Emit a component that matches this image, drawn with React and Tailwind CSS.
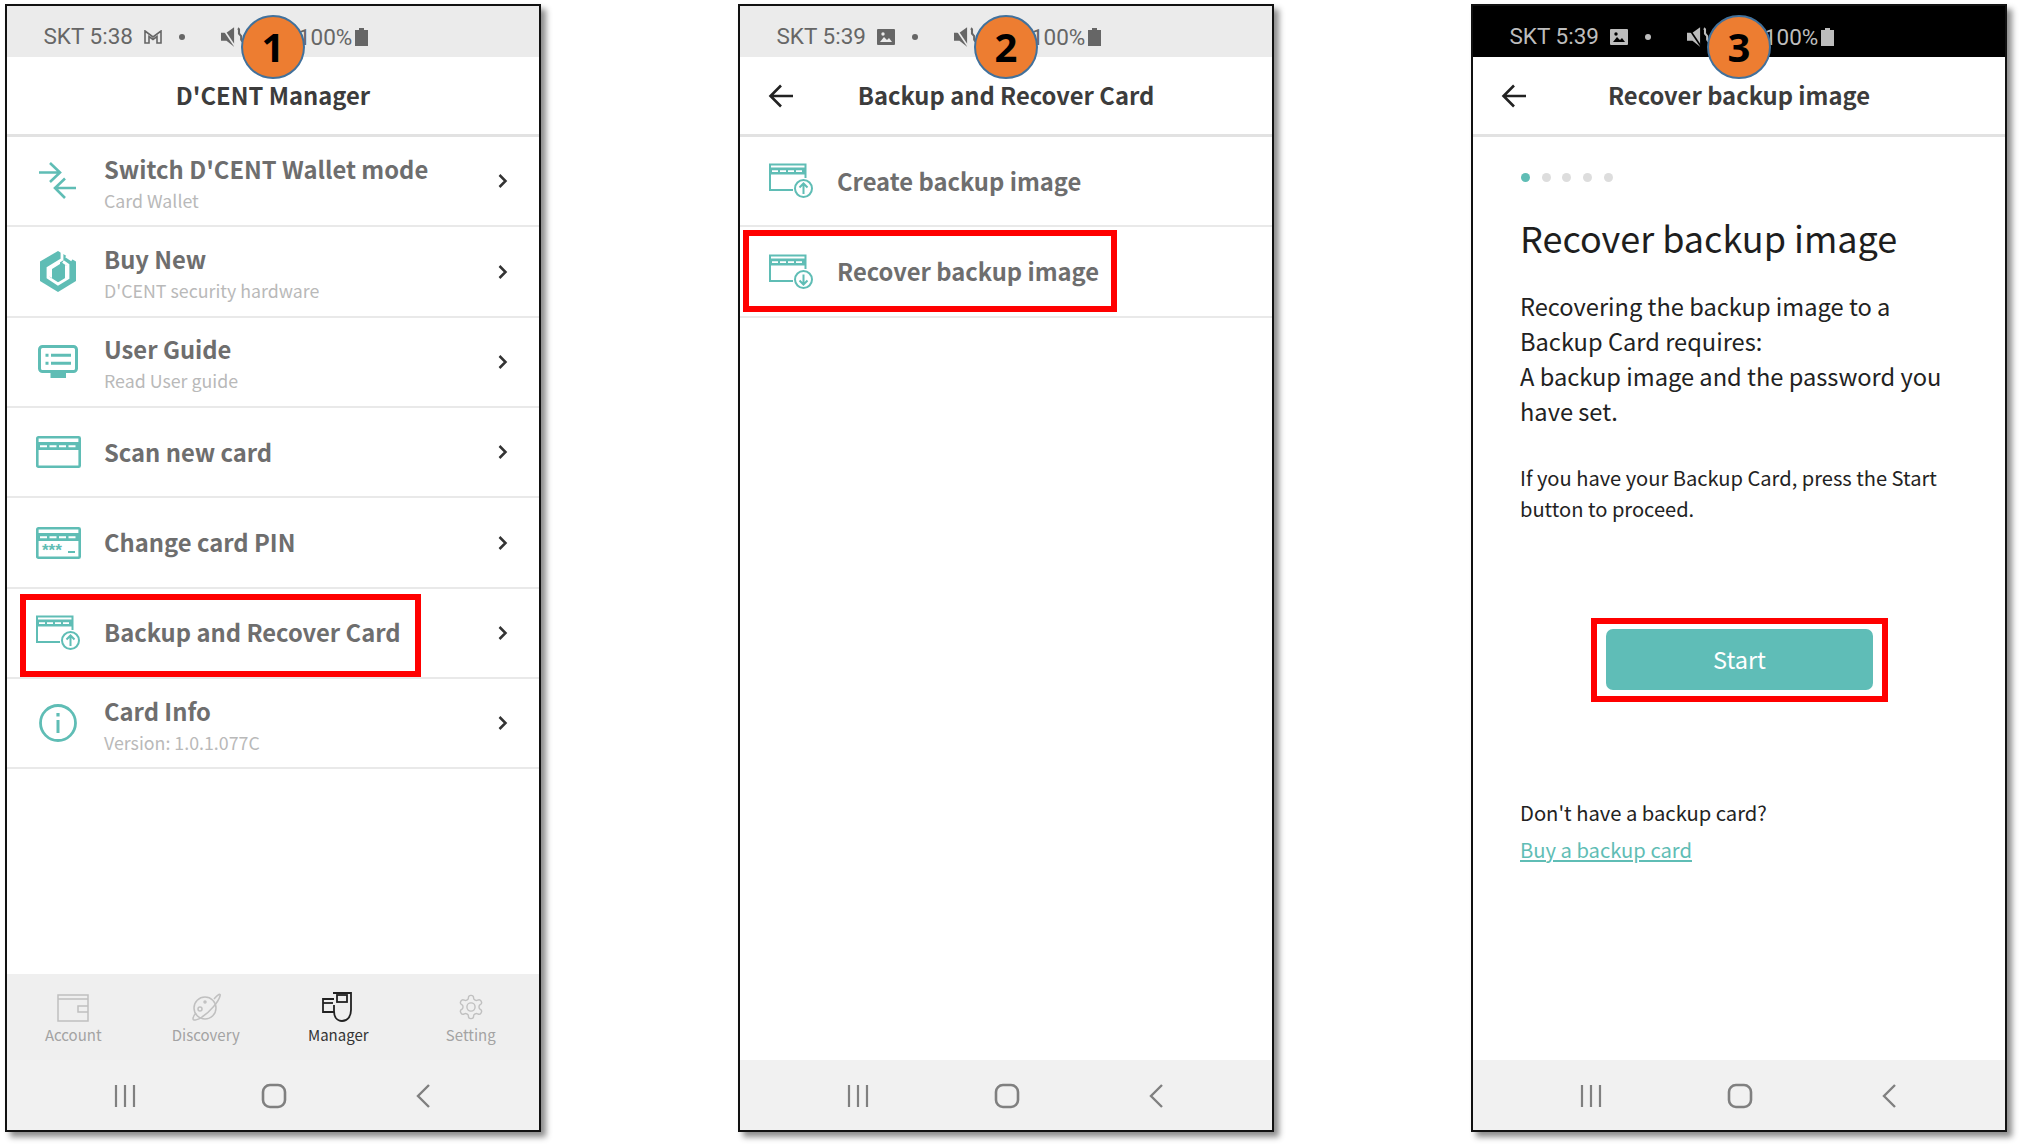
import React from "react";

const TEAL = "#5fbdb5";
const FONT = "font-['Noto_Sans_CJK_KR','Noto_Sans',sans-serif]";

function CardIcon({ pin }) {
  return (
    <svg width="45" height="32" viewBox="0 0 45 32" fill="none">
      <rect x="1.300" y="1.300" width="42.400" height="29.400" rx="1" stroke={TEAL} strokeWidth="2.600" />
      <rect x="1" y="6" width="43" height="8" fill={TEAL} />
      <path d="M4 10.200H41" stroke="#fff" strokeWidth="2" strokeDasharray="7 2.500" />
      {pin && (
        <g fill={TEAL} stroke="none">
          <text x="6" y="29" fontSize="17" fontWeight="700" fontFamily="Liberation Sans">***</text>
          <rect x="32" y="24" width="7" height="2" />
        </g>
      )}
    </svg>
  );
}

function BackupIcon({ down }) {
  return (
    <svg width="46" height="36" viewBox="0 0 46 36" fill="none">
      <path d="M25 27H2V1.500H37.500V15" stroke={TEAL} strokeWidth="2" />
      <rect x="2" y="4.500" width="35.500" height="7" fill={TEAL} />
      <path d="M4 8.100H36" stroke="#fff" strokeWidth="1.800" strokeDasharray="6 2" />
      <circle cx="35.500" cy="25.500" r="8.500" fill="#fff" stroke={TEAL} strokeWidth="2" />
      {down ? (
        <path d="M35.500 20.500V30M31.500 26.500L35.500 30.500L39.500 26.500" stroke={TEAL} strokeWidth="2" />
      ) : (
        <path d="M35.500 31V21M31.500 24.500L35.500 20.500L39.500 24.500" stroke={TEAL} strokeWidth="2" />
      )}
    </svg>
  );
}

const icons = {
  switch: (
    <svg width="40" height="38" viewBox="0 0 40 38" fill="none" stroke={TEAL} strokeWidth="2.600">
      <path d="M1 10.500H22M12 1L22 10.500L12 20" />
      <path d="M38 26H17M27 16.500L17 26L27 36" />
    </svg>
  ),
  logo: (
    <svg width="36" height="41" viewBox="0 0 36 41" fill="none">
      <path fill={TEAL} d="M18 0 36 10.500V30L18 41 0 30V10.500z" />
      <path stroke="#fff" strokeWidth="2.800" d="M22 -1V8.500L8 17V26.500L18 33L28 27V14L23 10.500" />
      <path stroke="#fff" strokeWidth="2.800" d="M26 5 32 9" />
      <path fill="#fff" d="M8 17 20 10V13L12 18V27L8 25zM25 14l3 1v12l-3 2z" />
    </svg>
  ),
  guide: (
    <svg width="40" height="33" viewBox="0 0 40 33" fill="none" stroke={TEAL} strokeWidth="3">
      <rect x="1.500" y="1.500" width="37" height="25" rx="3" />
      <rect x="12.500" y="27" width="15.500" height="6" fill={TEAL} stroke="none" />
      <path d="M7.500 10.300H10.500M13 10.300H33M7.500 18.300H10.500M13 18.300H33" />
    </svg>
  ),
  info: (
    <svg width="38" height="40" viewBox="0 0 38 40" fill="none" stroke={TEAL}>
      <circle cx="19" cy="20" r="17.500" strokeWidth="2.800" />
      <path d="M19 17V30" strokeWidth="3" />
      <path d="M19 10V13.500" strokeWidth="3.200" />
    </svg>
  ),
};

function Chevron() {
  return (
    <svg width="12" height="16" viewBox="0 0 12 16" fill="none" stroke="#333" strokeWidth="2.500" className="ml-auto mr-[30px] shrink-0">
      <path d="M2.500 2L8.500 8L2.500 14" />
    </svg>
  );
}

function MenuRow({ icon, title, sub, chevron = true, marked, markClass }) {
  return (
    <div className="relative flex h-[90.350px] items-center border-b-2 border-[#e9e9e9] pl-[28px]">
      <div className="flex w-[46px] shrink-0 items-center justify-center">{icon}</div>
      <div className={`ml-[23px] flex flex-col ${sub ? "pt-[1px]" : "pb-[1px]"}`}>
        <div className="text-[23.750px] leading-[36px] font-semibold text-[#6e6e6e]">{title}</div>
        {sub && <div className="text-[17.800px] leading-[26px] text-[#b9b9b9]">{sub}</div>}
      </div>
      {chevron && <Chevron />}
      {marked && <div className={`absolute border-[6px] border-[#ff0000] ${markClass}`} />}
    </div>
  );
}

function StatusBar({ time, kind, dark, number }) {
  const c = dark ? "#bdbdbd" : "#666666";
  const bg = dark ? "#000000" : "#ebebeb";
  return (
    <div className={`relative flex h-[51px] shrink-0 items-center pl-[36.500px] pt-[11px] ${dark ? "bg-black" : "bg-[#ebebeb]"}`}>
      <span className="text-[22.500px] font-['Roboto',sans-serif]" style={{ color: c }}>SKT {time}</span>
      <span className="ml-[10px] flex w-[20px] items-center justify-center">
        {kind === "mail" ? (
          <svg width="18" height="14" viewBox="0 0 18 14" fill="none" stroke={c} strokeWidth="1.600">
            <path d="M1 1L9 7L17 1V13H13V6.500L9 9.500L5 6.500V13H1Z" />
          </svg>
        ) : (
          <svg width="18" height="18" viewBox="0 0 18 18">
            <rect x="0" y="1" width="18" height="16" rx="1" fill={c} />
            <path fill={bg} d="M3 14l4-5 3 3 2-2 3 4z" />
            <circle cx="6" cy="6" r="1.700" fill={bg} />
          </svg>
        )}
      </span>
      <span className="ml-[16px] size-[6px] rounded-full" style={{ backgroundColor: c }} />
      <span className="ml-[36px] flex">
        <svg width="24" height="22" viewBox="0 0 22 20" fill="none">
          <path fill={c} d="M0 6h5L12 1v18l-7-5.500H0z" />
          <path d="M1 1l12 18" stroke={bg} strokeWidth="1.500" />
          <path d="M15.500 2c3 2-1 4 2 6s-1 4 2 6" stroke={c} strokeWidth="2" />
        </svg>
      </span>
      <span className="ml-[53px] text-[22.500px] font-['Roboto',sans-serif] leading-none" style={{ color: c }}>100%</span>
      <svg width="13" height="18" viewBox="0 0 13 18" className="ml-[3px]">
        <path fill={c} d="M4 0h5v2h4v16H0V2h4z" />
      </svg>
      <div className="absolute left-[234px] top-[9px] z-10 flex size-[64px] items-center justify-center rounded-full border-2 border-[#41719c] bg-[#ed7d31] font-['Open_Sans',sans-serif] text-[40px] font-bold text-black">
        {number}
      </div>
    </div>
  );
}

function Header({ title, back }) {
  return (
    <div className="grid h-[80px] shrink-0 grid-cols-[1fr_auto_1fr] items-center border-b-[3px] border-[#e2e2e2]">
      <div className="pl-[28px]">
        {back && (
          <svg width="26" height="26" viewBox="0 0 26 26" fill="none" stroke="#222" strokeWidth="2.600">
            <path d="M25 13H3M13 2.500L2.500 13L13 23.500" />
          </svg>
        )}
      </div>
      <div className="pb-[2px] text-[23.750px] font-semibold text-[#3c3c3c]">{title}</div>
      <div />
    </div>
  );
}

function SoftKeys() {
  return (
    <div className="grid h-[70px] shrink-0 grid-cols-3 items-center bg-[#f1f1f1] pl-[43px] pr-[41px] pt-[1px]">
      <svg width="24" height="26" viewBox="0 0 24 26" stroke="#808080" strokeWidth="2.200" className="justify-self-center">
        <path d="M3 2V24M12 2V24M21 2V24" />
      </svg>
      <svg width="26" height="26" viewBox="0 0 26 26" fill="none" stroke="#808080" strokeWidth="2.600" className="justify-self-center">
        <rect x="2" y="2" width="22" height="22" rx="7" />
      </svg>
      <svg width="16" height="26" viewBox="0 0 16 26" fill="none" stroke="#808080" strokeWidth="2.400" className="justify-self-center">
        <path d="M14 2L3 13L14 24" />
      </svg>
    </div>
  );
}

function Phone({ children }) {
  return (
    <div className="flex h-[1128px] w-[536px] flex-col overflow-visible border-2 border-[#111] bg-white shadow-[5px_5px_6px_rgba(0,0,0,0.45)]">
      {children}
    </div>
  );
}

function Tab({ label, active, children }) {
  return (
    <div className="flex flex-col items-center">
      <div className="flex h-[36px] items-end">{children}</div>
      <div className={`mt-[2px] text-[15px] leading-[22px] ${active ? "text-[#333]" : "text-[#a3a3a3]"}`}>{label}</div>
    </div>
  );
}

function TabBar() {
  const g = "#c0c0c0";
  return (
    <div className="grid h-[86px] shrink-0 grid-cols-4 bg-[#efefef] pr-[2px] pt-[12px]">
      <Tab label="Account">
        <svg width="32" height="28" viewBox="0 0 32 28" fill="none" stroke={g} strokeWidth="1.500">
          <path d="M1 1H31V27H1ZM1 5H31M31 12H21V18H31" />
        </svg>
      </Tab>
      <Tab label="Discovery">
        <svg width="30" height="30" viewBox="0 0 30 30" fill="none" stroke={g} strokeWidth="1.500">
          <circle cx="14" cy="16" r="11" />
          <path d="M23 7c4-5 7-6 6-3-1 5-10 16-18 21-4 3-9 4-9 2 0-2 1-4 3-6" />
          <circle cx="9" cy="17" r="2" />
          <circle cx="14" cy="10" r="1" />
        </svg>
      </Tab>
      <Tab label="Manager" active>
        <svg width="32" height="32" viewBox="0 0 32 32" fill="none" stroke="#222" strokeWidth="1.800">
          <path d="M11 3H29V20C29 26 26 31 20 31C15 31 12 27 12 21V15" />
          <rect x="15" y="5" width="10" height="7" />
          <path d="M12 9H1V22H12" />
          <path d="M1 13H11" />
        </svg>
      </Tab>
      <Tab label="Setting">
        <svg width="28" height="30" viewBox="0 0 24 24" fill="none" stroke={g} strokeWidth="1.200">
          <path d="M12.220 2h-.440a2 2 0 0 0-2 2v.180a2 2 0 0 1-1 1.730l-.430.250a2 2 0 0 1-2 0l-.150-.080a2 2 0 0 0-2.730.730l-.220.380a2 2 0 0 0 .730 2.730l.150.100a2 2 0 0 1 1 1.720v.510a2 2 0 0 1-1 1.740l-.150.090a2 2 0 0 0-.730 2.730l.220.380a2 2 0 0 0 2.730.730l.150-.080a2 2 0 0 1 2 0l.430.250a2 2 0 0 1 1 1.730V20a2 2 0 0 0 2 2h.440a2 2 0 0 0 2-2v-.180a2 2 0 0 1 1-1.730l.430-.250a2 2 0 0 1 2 0l.150.080a2 2 0 0 0 2.730-.730l.220-.390a2 2 0 0 0-.730-2.730l-.150-.080a2 2 0 0 1-1-1.740v-.500a2 2 0 0 1 1-1.740l.150-.090a2 2 0 0 0 .730-2.730l-.220-.380a2 2 0 0 0-2.730-.730l-.150.080a2 2 0 0 1-2 0l-.430-.250a2 2 0 0 1-1-1.730V4a2 2 0 0 0-2-2z" />
          <circle cx="12" cy="12" r="3.500" />
        </svg>
      </Tab>
    </div>
  );
}

export default function App() {
  return (
    <div className={`flex h-[1146px] w-[2021px] justify-between overflow-hidden bg-white pl-[5px] pr-[14px] pt-[4px] ${FONT}`}>
      <Phone>
        <StatusBar time="5:38" kind="mail" number="1" />
        <Header title="D'CENT Manager" />
        <div className="flex-1">
          <MenuRow icon={icons.switch} title="Switch D'CENT Wallet mode" sub="Card Wallet" />
          <MenuRow icon={icons.logo} title="Buy New" sub="D'CENT security hardware" />
          <MenuRow icon={icons.guide} title="User Guide" sub="Read User guide" />
          <MenuRow icon={<CardIcon />} title="Scan new card" />
          <MenuRow icon={<CardIcon pin />} title="Change card PIN" />
          <MenuRow
            icon={<BackupIcon />}
            title="Backup and Recover Card"
            marked
            markClass="left-[13px] top-[5px] h-[83px] w-[401px]"
          />
          <MenuRow icon={icons.info} title="Card Info" sub="Version: 1.0.1.077C" />
        </div>
        <TabBar />
        <SoftKeys />
      </Phone>

      <Phone>
        <StatusBar time="5:39" kind="image" number="2" />
        <Header title="Backup and Recover Card" back />
        <div className="flex-1">
          <MenuRow icon={<BackupIcon />} title="Create backup image" chevron={false} />
          <MenuRow
            icon={<BackupIcon down />}
            title="Recover backup image"
            chevron={false}
            marked
            markClass="left-[3px] top-[3px] h-[82px] w-[374px]"
          />
        </div>
        <SoftKeys />
      </Phone>

      <Phone>
        <StatusBar time="5:39" kind="image" number="3" dark />
        <Header title="Recover backup image" back />
        <div className="flex flex-1 flex-col pl-[47px] pr-[20px]">
          <div className="mt-[36px] flex gap-[11.700px] pl-[1px]">
            <span className="size-[9px] rounded-full bg-[#5fbdb5]" />
            <span className="size-[9px] rounded-full bg-[#dddddd]" />
            <span className="size-[9px] rounded-full bg-[#dddddd]" />
            <span className="size-[9px] rounded-full bg-[#dddddd]" />
            <span className="size-[9px] rounded-full bg-[#dddddd]" />
          </div>
          <h1 className="mt-[27.500px] text-[36px] leading-[54px] text-[#1e1e1e]">Recover backup image</h1>
          <p className="mt-[25.500px] text-[23.650px] leading-[35px] text-[#222]">
            Recovering the backup image to a
            <br />
            Backup Card requires:
            <br />
            A backup image and the password you
            <br />
            have set.
          </p>
          <p className="mt-[32.500px] text-[20.100px] leading-[31px] text-[#222]">
            If you have your Backup Card, press the Start
            <br />
            button to proceed.
          </p>
          <div className="relative mt-[94px] ml-[71px] flex h-[84px] w-[297px] items-center justify-center border-[6px] border-[#ff0000]">
            <div className="flex h-[61px] w-[267px] items-center justify-center rounded-[7px] bg-[#5fbdb7] text-[23.500px] text-white">
              Start
            </div>
          </div>
          <div className="mt-[95px] text-[20.200px] leading-[31px] text-[#222]">Don't have a backup card?</div>
          <div className="mt-[6px] text-[20.200px] leading-[31px] text-[#5fbdb5] underline underline-offset-2">Buy a backup card</div>
        </div>
        <SoftKeys />
      </Phone>
    </div>
  );
}
